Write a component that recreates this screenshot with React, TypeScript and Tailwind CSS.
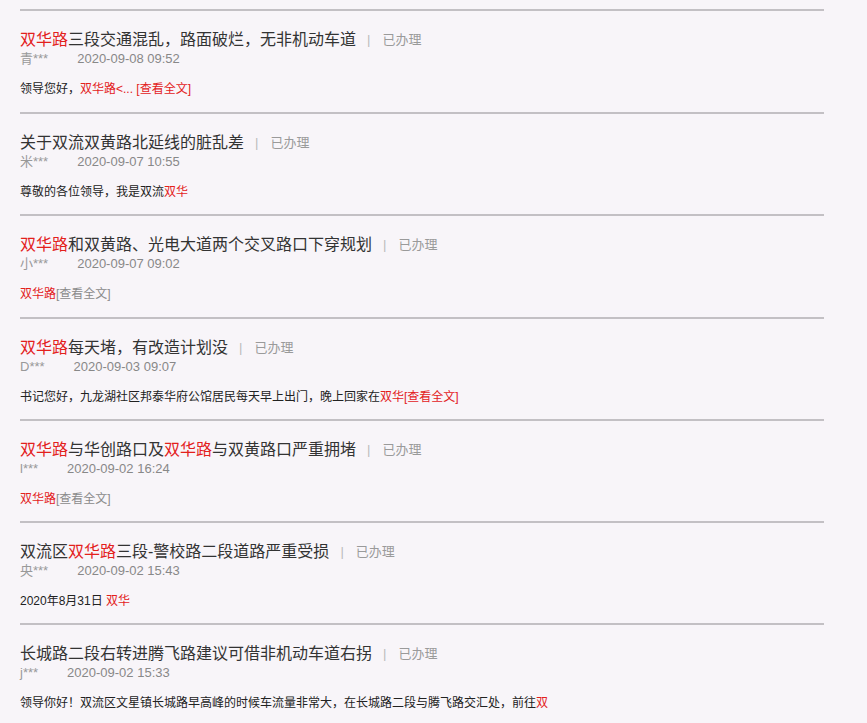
import React from 'react';

type Seg = { t: string; c?: 'red' | 'gray' };

type Item = {
  title: Seg[];
  name: string;
  date: string;
  body: Seg[];
  tall?: boolean;
};

const items: Item[] = [
  {
    title: [{ t: '双华路', c: 'red' }, { t: '三段交通混乱，路面破烂，无非机动车道' }],
    name: '青***',
    date: '2020-09-08 09:52',
    body: [{ t: '领导您好，' }, { t: '双华路<...', c: 'red' }, { t: ' [查看全文]', c: 'red' }],
    tall: true,
  },
  {
    title: [{ t: '关于双流双黄路北延线的脏乱差' }],
    name: '米***',
    date: '2020-09-07 10:55',
    body: [{ t: '尊敬的各位领导，我是双流' }, { t: '双华', c: 'red' }],
  },
  {
    title: [{ t: '双华路', c: 'red' }, { t: '和双黄路、光电大道两个交叉路口下穿规划' }],
    name: '小***',
    date: '2020-09-07 09:02',
    body: [{ t: '双华路', c: 'red' }, { t: '[查看全文]', c: 'gray' }],
    tall: true,
  },
  {
    title: [{ t: '双华路', c: 'red' }, { t: '每天堵，有改造计划没' }],
    name: 'D***',
    date: '2020-09-03 09:07',
    body: [
      { t: '书记您好，九龙湖社区邦泰华府公馆居民每天早上出门，晚上回家在' },
      { t: '双华', c: 'red' },
      { t: '[查看全文]', c: 'red' },
    ],
  },
  {
    title: [
      { t: '双华路', c: 'red' },
      { t: '与华创路口及' },
      { t: '双华路', c: 'red' },
      { t: '与双黄路口严重拥堵' },
    ],
    name: 'l***',
    date: '2020-09-02 16:24',
    body: [{ t: '双华路', c: 'red' }, { t: '[查看全文]', c: 'gray' }],
  },
  {
    title: [{ t: '双流区' }, { t: '双华路', c: 'red' }, { t: '三段-警校路二段道路严重受损' }],
    name: '央***',
    date: '2020-09-02 15:43',
    body: [{ t: '2020年8月31日 ' }, { t: '双华', c: 'red' }],
  },
  {
    title: [{ t: '长城路二段右转进腾飞路建议可借非机动车道右拐' }],
    name: 'j***',
    date: '2020-09-02 15:33',
    body: [
      { t: '领导你好！双流区文星镇长城路早高峰的时候车流量非常大，在长城路二段与腾飞路交汇处，前往' },
      { t: '双', c: 'red' },
    ],
  },
];

function Segs({ segs }: { segs: Seg[] }) {
  return (
    <>
      {segs.map((s, i) => (
        <span
          key={i}
          className={
            s.c === 'red' ? 'text-[#e3211c]' : s.c === 'gray' ? 'text-[#8a8a8a]' : undefined
          }
        >
          {s.t}
        </span>
      ))}
    </>
  );
}

function Row({ item }: { item: Item }) {
  return (
    <div
      className={`border-t-2 border-[#c3c0c4] pt-[18px] ${item.tall ? 'pb-[13px]' : 'pb-[12px]'}`}
    >
      <div className="flex items-center whitespace-nowrap text-[16px] leading-[22px] text-[#333]">
        <span>
          <Segs segs={item.title} />
        </span>
        <span className="ml-[11px] mr-[12px] text-[13px] text-[#bbb]">|</span>
        <span className="text-[13px] text-[#9a9a9a]">已办理</span>
      </div>
      <div className="flex whitespace-nowrap text-[13px] leading-[15px] text-[#999]">
        <span className="mr-[29px]">{item.name}</span>
        <span className="text-[#888]">{item.date}</span>
      </div>
      <div className="mt-[13px] whitespace-nowrap text-[12px] leading-[20px] text-[#222]">
        <Segs segs={item.body} />
      </div>
    </div>
  );
}

export default function App() {
  return (
    <div
      className="min-h-screen bg-[#f8f5f9] pt-[9px] overflow-hidden"
      style={{ fontFamily: '"Liberation Sans", "Noto Sans CJK SC", sans-serif' }}
    >
      <div className="ml-[20px] w-[804px]">
        {items.map((item, i) => (
          <Row key={i} item={item} />
        ))}
      </div>
    </div>
  );
}
